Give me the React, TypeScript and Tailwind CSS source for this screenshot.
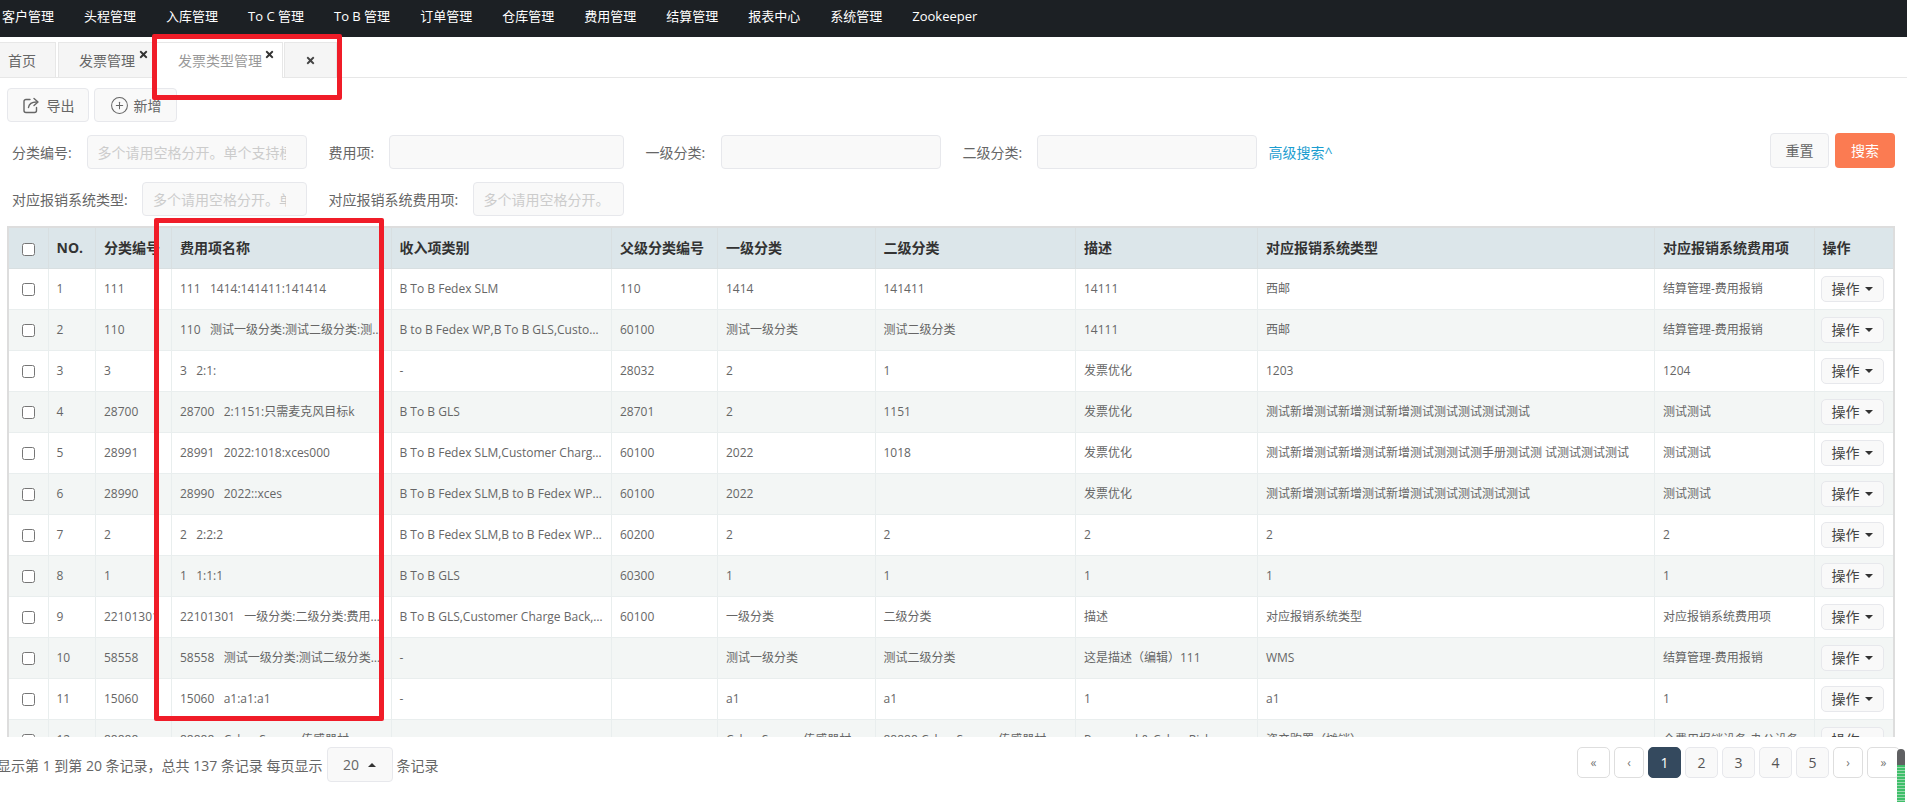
import { CirclePlus } from 'lucide-react'
import { FaTimes } from 'react-icons/fa'

const NAV_ITEMS = ['客户管理', '头程管理', '入库管理', 'To C 管理', 'To B 管理', '订单管理', '仓库管理', '费用管理', '结算管理', '报表中心', '系统管理', 'Zookeeper']

const COLUMNS = [
  { title: 'NO.', width: 'w-[47.5px]' },
  { title: '分类编号', width: 'w-[76px]' },
  { title: '费用项名称', width: 'w-[219.5px]' },
  { title: '收入项类别', width: 'w-[220.5px]' },
  { title: '父级分类编号', width: 'w-[106px]' },
  { title: '一级分类', width: 'w-[157.5px]' },
  { title: '二级分类', width: 'w-[200.5px]' },
  { title: '描述', width: 'w-[182px]' },
  { title: '对应报销系统类型', width: 'w-[397px]' },
  { title: '对应报销系统费用项', width: 'w-[159.5px]' },
]

const ROWS = [
  ['1', '111', '111   1414:141411:141414', 'B To B Fedex SLM', '110', '1414', '141411', '14111', '西邮', '结算管理-费用报销'],
  ['2', '110', '110   测试一级分类:测试二级分类:测试费用项', 'B to B Fedex WP,B To B GLS,Customer Charge Back', '60100', '测试一级分类', '测试二级分类', '14111', '西邮', '结算管理-费用报销'],
  ['3', '3', '3   2:1:', '-', '28032', '2', '1', '发票优化', '1203', '1204'],
  ['4', '28700', '28700   2:1151:只需麦克风目标k', 'B To B GLS', '28701', '2', '1151', '发票优化', '测试新增测试新增测试新增测试测试测试测试测试', '测试测试'],
  ['5', '28991', '28991   2022:1018:xces000', 'B To B Fedex SLM,Customer Charge Back', '60100', '2022', '1018', '发票优化', '测试新增测试新增测试新增测试测测试测手册测试测 试测试测试测试', '测试测试'],
  ['6', '28990', '28990   2022::xces', 'B To B Fedex SLM,B to B Fedex WP,B To B GLS', '60100', '2022', '', '发票优化', '测试新增测试新增测试新增测试测试测试测试测试', '测试测试'],
  ['7', '2', '2   2:2:2', 'B To B Fedex SLM,B to B Fedex WP,B To B GLS', '60200', '2', '2', '2', '2', '2'],
  ['8', '1', '1   1:1:1', 'B To B GLS', '60300', '1', '1', '1', '1', '1'],
  ['9', '22101301', '22101301   一级分类:二级分类:费用项名称', 'B To B GLS,Customer Charge Back,B To B Fedex', '60100', '一级分类', '二级分类', '描述', '对应报销系统类型', '对应报销系统费用项'],
  ['10', '58558', '58558   测试一级分类:测试二级分类:费用项', '-', '', '测试一级分类', '测试二级分类', '这是描述（编辑）111', 'WMS', '结算管理-费用报销'],
  ['11', '15060', '15060   a1:a1:a1', '-', '', 'a1', 'a1', '1', 'a1', '1'],
  ['12', '88888', '88888   Cyber Sensor 传感器材', '-', '', 'Cyber Sensor 传感器材', '88888 Cyber Sensor 传感器材', 'Password & Cyber Risk', '资产购置（摊销）', '全費用报销设备-办公设备'],
]

function Field({ label, labelWidth, inputWidth, placeholder }: { label: string; labelWidth: string; inputWidth: string; placeholder?: string }) {
  return (
    <div className="mr-[22px] flex items-center">
      <span className={`${labelWidth} shrink-0 whitespace-nowrap text-[14px] text-[#666]`}>{label}</span>
      <input
        placeholder={placeholder}
        className={`${inputWidth} h-[34px] rounded border border-[#e7e8ec] bg-[#f9f9f9] pr-5 pl-[10px] text-[14px] placeholder:text-[#ccc]`}
      />
    </div>
  )
}

function ExportIcon() {
  return (
    <svg width="18" height="18" viewBox="0 0 18 18" fill="none" stroke="#666" strokeWidth="1.4" strokeLinecap="round" strokeLinejoin="round">
      <path d="M8 3.5H4a2 2 0 0 0-2 2v9a2 2 0 0 0 2 2h8.500a2 2 0 0 0 2-2v-3" />
      <path d="M6.500 11.500c.5-3.500 3-5.500 8-5.500" />
      <path d="M12 2.500 16 6l-4 3.500" />
    </svg>
  )
}

function PageButton({ label, width, kind }: { label: string; width: string; kind: 'arrow' | 'page' | 'active' }) {
  const look = {
    arrow: 'border-[#dedede] bg-white text-[#777] text-[12px]',
    page: 'border-[#e7e8ec] bg-[#f9f9f9] text-[#555] text-[14px]',
    active: 'border-[#34495e] bg-[#34495e] text-white text-[14px]',
  }[kind]
  return <div className={`flex h-[31px] ${width} items-center justify-center rounded-[5px] border ${look}`}>{label}</div>
}

export default function App() {
  return (
    <div className="relative flex h-screen flex-col overflow-hidden bg-white font-['Open_Sans','Noto_Sans_CJK_SC',sans-serif] text-[#666]">
      {/* top nav */}
      <nav className="flex h-[37px] shrink-0 items-center gap-[30px] bg-[#1c2024] pb-[3px] pl-[2px] text-[13px] whitespace-nowrap text-white">
        {NAV_ITEMS.map((item) => (
          <span key={item}>{item}</span>
        ))}
      </nav>

      {/* tabs */}
      <div className="mt-[5px] flex h-[36px] shrink-0 border-b border-[#e7e7e7] text-[14px]">
        <div className="flex w-[56px] items-center border-t border-r border-[#e7e7e7] bg-[#f5f5f5] pl-2">首页</div>
        <div className="relative ml-[2px] flex w-[95px] items-center border-t border-x border-[#e7e7e7] bg-[#f5f5f5] pl-5">
          发票管理
          <FaTimes className="absolute top-[6px] left-[79px] text-[11px] text-[#333]" />
        </div>
        <div className="relative ml-[2px] flex h-[36px] w-[128px] items-center border-t border-r border-[#e7e7e7] bg-white pl-[23px] text-[#999]">
          发票类型管理
          <FaTimes className="absolute top-[6px] left-[109px] text-[11px] text-[#333]" />
        </div>
        <div className="ml-[1px] flex w-[53px] items-center justify-center border-t border-x border-[#e7e7e7] bg-[#f5f5f5]">
          <FaTimes className="text-[11px] text-[#444]" />
        </div>
      </div>

      {/* toolbar */}
      <div className="mt-[10px] flex shrink-0 gap-[5px] pl-[7px] text-[14px]">
        <button className="flex h-[34px] w-[82px] items-center justify-center gap-[7px] rounded border border-[#e7e8ec] bg-[#f9f9f9]">
          <ExportIcon />
          导出
        </button>
        <button className="flex h-[34px] w-[83px] items-center justify-center gap-[5px] rounded border border-[#e7e8ec] bg-[#f9f9f9]">
          <CirclePlus size={19} strokeWidth={1.3} className="text-[#666]" />
          新增
        </button>
      </div>

      {/* filters */}
      <div className="mt-[13px] flex shrink-0 items-start pr-[12px] pl-[12px]">
        <Field label="分类编号:" labelWidth="w-[74.5px]" inputWidth="w-[220px]" placeholder="多个请用空格分开。单个支持模糊搜索" />
        <Field label="费用项:" labelWidth="w-[60px]" inputWidth="w-[235px]" />
        <Field label="一级分类:" labelWidth="w-[75px]" inputWidth="w-[220px]" />
        <div className="flex items-center">
          <span className="w-[74px] shrink-0 text-[14px]">二级分类:</span>
          <input className="h-[34px] w-[220px] rounded border border-[#e7e8ec] bg-[#f9f9f9]" />
        </div>
        <span className="mt-[7px] ml-[12px] text-[14px] text-[#1b9dd0]">高级搜索^</span>
        <button className="mt-[-2px] ml-auto h-[35px] w-[59px] rounded border border-[#e7e8ec] bg-[#f9f9f9] text-[14px]">重置</button>
        <button className="mt-[-2px] ml-[6px] h-[35px] w-[60px] rounded bg-[#fb7b52] text-[14px] text-white">搜索</button>
      </div>
      <div className="mt-[13px] flex shrink-0 pl-[12px]">
        <Field label="对应报销系统类型:" labelWidth="w-[130px]" inputWidth="w-[164.5px]" placeholder="多个请用空格分开。单个支持模糊搜索" />
        <Field label="对应报销系统费用项:" labelWidth="w-[144px]" inputWidth="w-[151.500px]" placeholder="多个请用空格分开。单个支持模糊搜索" />
      </div>

      {/* table, cut off by the footer */}
      <div className="mt-[10px] ml-[7px] h-[511px] w-[1888px] shrink-0 overflow-hidden border-x-2 border-t-2 border-[#ddd]">
        <table className="w-[1884px] table-fixed text-[12px]">
          <colgroup>
            <col className="w-[39px]" />
            {COLUMNS.map((col) => (
              <col key={col.title} className={col.width} />
            ))}
            <col className="w-[79px]" />
          </colgroup>
          <thead>
            <tr className="h-[40px] bg-[#dce6ea] text-left text-[14px] text-[#333]">
              <th className="border-r border-b border-[#d8dfe1] text-center font-normal">
                <input type="checkbox" className="align-middle" />
              </th>
              {COLUMNS.map((col) => (
                <th key={col.title} className="truncate border-r border-b border-[#d8dfe1] px-2 font-bold">
                  {col.title}
                </th>
              ))}
              <th className="border-b border-[#d8dfe1] px-2 font-bold">操作</th>
            </tr>
          </thead>
          <tbody>
            {ROWS.map((row, index) => (
              <tr key={row[0]} className={`h-[41px] ${index % 2 === 1 ? 'bg-[#f3f6f5]' : 'bg-white'}`}>
                <td className="border-r border-b border-[#e9eeee] text-center">
                  <input type="checkbox" className="align-middle" />
                </td>
                {row.map((cell, cellIndex) => (
                  <td key={cellIndex} className="truncate border-r border-b border-[#e9eeee] px-2 whitespace-pre">
                    {cell}
                  </td>
                ))}
                <td className="border-b border-[#e9eeee] px-[6px]">
                  <button className="flex h-[26px] w-[63px] items-center justify-center gap-[5px] rounded-[5px] border border-[#e7e8ec] bg-[#f9f9f9] text-[14px] text-[#444]">
                    操作
                    <span className="border-x-4 border-t-4 border-x-transparent border-t-[#333]" />
                  </button>
                </td>
              </tr>
            ))}
          </tbody>
        </table>
      </div>

      {/* footer */}
      <div className="flex flex-1 items-start pt-[10px] pr-[7px] text-[14px] whitespace-nowrap">
        <span className="ml-[-3px] mt-[8px]">显示第 1 到第 20 条记录，总共 137 条记录 每页显示</span>
        <div className="ml-[4px] flex h-[35px] w-[66px] items-center justify-center gap-[9px] rounded border border-[#e7e8ec] bg-[#f9f9f9]">
          20
          <span className="border-x-4 border-b-4 border-x-transparent border-b-[#333]" />
        </div>
        <span className="mt-[8px] ml-[4px]">条记录</span>
        <div className="ml-auto flex gap-[4px]">
          <PageButton label="«" width="w-[33px]" kind="arrow" />
          <PageButton label="‹" width="w-[30px]" kind="arrow" />
          <PageButton label="1" width="w-[33px]" kind="active" />
          <PageButton label="2" width="w-[33px]" kind="page" />
          <PageButton label="3" width="w-[33px]" kind="page" />
          <PageButton label="4" width="w-[33px]" kind="page" />
          <PageButton label="5" width="w-[33px]" kind="page" />
          <PageButton label="›" width="w-[30px]" kind="arrow" />
          <PageButton label="»" width="w-[33px]" kind="arrow" />
        </div>
      </div>

      {/* annotation boxes drawn over the screenshot */}
      <div className="pointer-events-none absolute top-[34px] left-[152px] h-[66px] w-[190px] rounded-[2px] border-[5px] border-[#f01c28]" />
      <div className="pointer-events-none absolute top-[218px] left-[154px] h-[503px] w-[230px] rounded-[2px] border-[5px] border-[#f01c28]" />

      {/* little meter in the bottom-right corner */}
      <div className="absolute top-[749px] left-[1897px] h-[53px] w-[8px] rounded-t-[4px] bg-[#5f6062] pt-[16px]">
        <div className="h-full bg-[repeating-linear-gradient(to_bottom,#3fbf6a_0,#3fbf6a_2px,#9ad8ae_2px,#9ad8ae_3px)]" />
      </div>
    </div>
  )
}
